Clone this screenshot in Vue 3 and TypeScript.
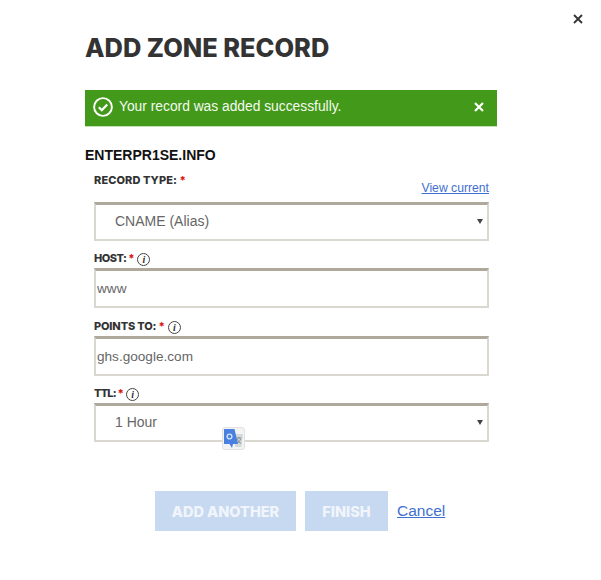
<template>
  <div class="page">
    <button class="close" aria-label="Close">
      <svg width="10" height="10" viewBox="0 0 10 10"><path d="M1 1l8 8M9 1l-8 8" stroke="#333" stroke-width="1.8" fill="none" /></svg>
    </button>

    <h1 class="title">ADD ZONE RECORD</h1>

    <div class="banner">
      <svg class="check" width="20" height="20" viewBox="0 0 20 20">
        <circle cx="10" cy="10" r="8.9" stroke="#fff" stroke-width="1.9" fill="none" />
        <path d="M5.8 10.2l3 3 5.4-5.8" stroke="#fff" stroke-width="2.2" fill="none" />
      </svg>
      <span class="banner-text">Your record was added successfully.</span>
      <svg class="banner-x" width="10" height="10" viewBox="0 0 10 10"><path d="M1 1l8 8M9 1l-8 8" stroke="#fff" stroke-width="2.2" fill="none" /></svg>
    </div>

    <div class="domain">ENTERPR1SE.INFO</div>

    <form class="form" @submit.prevent>
      <div class="field first">
        <div class="label-row">
          <label class="wide">RECORD TYPE: <em>*</em></label>
          <a href="#" class="view">View current</a>
        </div>
        <div class="select-wrap">
          <select v-model="recordType">
            <option>CNAME (Alias)</option>
          </select>
        </div>
      </div>

      <div class="field host">
        <div class="label-row">
          <label class="narrow">HOST: <em>*</em></label>
          <span class="info">i</span>
        </div>
        <input v-model="host" type="text" />
      </div>

      <div class="field">
        <div class="label-row">
          <label>POINTS TO: <em>*</em></label>
          <span class="info">i</span>
        </div>
        <input v-model="pointsTo" type="text" />
      </div>

      <div class="field ttl">
        <div class="label-row">
          <label class="tight">TTL: <em>*</em></label>
          <span class="info">i</span>
        </div>
        <div class="select-wrap">
          <select v-model="ttl">
            <option>1 Hour</option>
          </select>
        </div>
      </div>
    </form>

    <div class="actions">
      <button class="btn another">ADD ANOTHER</button>
      <button class="btn finish">FINISH</button>
      <a href="#" class="cancel">Cancel</a>
    </div>

    <div class="translate">
      <svg width="21" height="21" viewBox="0 0 21 21">
        <path d="M12 6h8l-1.5 13H12z" fill="#d5dadd" />
        <path d="M13.5 10h5M16 9v1.5M14.2 11c.6 2 2.2 3.6 4 4.4M17.6 11c-.6 2-2.2 3.6-4 4.4" stroke="#76858c" stroke-width=".9" fill="none" />
        <path d="M1 1h10.5l3.5 15H10l-1 4-2.5-4H1z" fill="#4a80e0" />
        <circle cx="6.5" cy="8.5" r="2.4" fill="none" stroke="#d5e3fb" stroke-width="1.3" />
      </svg>
    </div>
  </div>
</template>

<script setup lang="ts">
import { ref } from 'vue';

const recordType = ref('CNAME (Alias)');
const host = ref('www');
const pointsTo = ref('ghs.google.com');
const ttl = ref('1 Hour');
</script>

<style>
html,
body {
  margin: 0;
  background: #fff;
}
</style>

<style scoped>
.page {
  position: relative;
  box-sizing: border-box;
  width: 601px;
  height: 580px;
  padding: 33px 104px 0 85px;
  font-family: 'Liberation Sans', Arial, sans-serif;
  overflow: hidden;
}

.close {
  position: absolute;
  top: 14px;
  right: 18px;
  padding: 0;
  border: none;
  background: none;
  line-height: 0;
}

.title {
  margin: 0;
  font-family: Inter, sans-serif;
  font-size: 25.4px;
  line-height: 30px;
  font-weight: 800;
  color: #333;
}

.banner {
  display: flex;
  align-items: center;
  box-sizing: border-box;
  height: 37px;
  margin-top: 27px;
  padding: 0 13px 3px 8px;
  border-bottom: 1px solid #c3dfb3;
  background: #43991a;
  color: #f4f9f0;
  font-size: 13.8px;
}

.check {
  margin-right: 6px;
}

.banner-text {
  flex: 1;
}

.domain {
  margin-top: 20px;
  font-size: 14px;
  line-height: 16px;
  font-weight: 700;
  color: #111;
}

.form {
  padding: 0 8px 0 9px;
}

.field {
  margin-top: 8px;
}

.field.first {
  margin-top: 9px;
}

.field.host,
.field.ttl {
  margin-top: 7px;
}

.label-row {
  display: flex;
  align-items: flex-end;
  height: 18px;
  margin-bottom: 2px;
}

.field.first .label-row {
  height: 29px;
  margin-bottom: 1px;
  align-items: flex-start;
}

label {
  font-family: Inter, sans-serif;
  font-size: 11px;
  line-height: 16px;
  font-weight: 800;
  color: #333;
  letter-spacing: -0.15px;
  white-space: pre;
}

label.wide {
  letter-spacing: 0.1px;
}

label.narrow {
  letter-spacing: -0.5px;
}

label.tight {
  letter-spacing: -0.8px;
}

label em {
  font-style: normal;
  color: #d11;
}

.view {
  margin-left: auto;
  margin-bottom: 5px;
  align-self: flex-end;
  font-size: 12.2px;
  line-height: 16px;
  color: #3f6fd0;
}

.info {
  box-sizing: border-box;
  width: 13px;
  height: 13px;
  margin-left: 3px;
  border: 1px solid #444;
  border-radius: 50%;
  font-family: 'Liberation Serif', serif;
  font-style: italic;
  font-weight: 700;
  font-size: 10px;
  line-height: 11px;
  text-align: center;
  color: #333;
}

.select-wrap {
  position: relative;
}

.select-wrap::after {
  content: '';
  position: absolute;
  top: 17px;
  right: 6px;
  border-style: solid;
  border-width: 5px 3px 0;
  border-color: #444 transparent transparent;
  pointer-events: none;
}

select,
input {
  display: block;
  box-sizing: border-box;
  width: 100%;
  height: 40px;
  margin: 0;
  border-style: solid;
  border-color: #d9d7d0;
  border-top-color: #afa99d;
  border-width: 3px 2px 2px;
  border-radius: 0;
  outline: none;
  background: #fff;
  font-family: 'Liberation Sans', Arial, sans-serif;
  font-size: 13.6px;
  color: #666;
}

input {
  padding: 0 1px;
}

select {
  height: 39px;
  padding: 0 0 2px 19px;
  appearance: none;
  font-size: 14px;
}

.actions {
  display: flex;
  align-items: center;
  margin-top: 49px;
  padding-left: 70px;
}

.btn {
  height: 40px;
  padding: 0;
  border: none;
  background: #c6d9f1;
  color: #f1f5fb;
  font-family: Inter, sans-serif;
  font-size: 14.5px;
  font-weight: 800;
}

.another {
  width: 141px;
}

.finish {
  width: 83px;
  margin-left: 9px;
}

.cancel {
  margin-left: 9px;
  font-size: 15.5px;
  color: #3f6fd0;
}

.translate {
  position: absolute;
  left: 222px;
  top: 427px;
  display: flex;
  align-items: center;
  justify-content: center;
  box-sizing: border-box;
  width: 23px;
  height: 23px;
  border: 1px solid #e2e2e2;
  border-radius: 3px;
  background: #f3f3f3;
}
</style>
